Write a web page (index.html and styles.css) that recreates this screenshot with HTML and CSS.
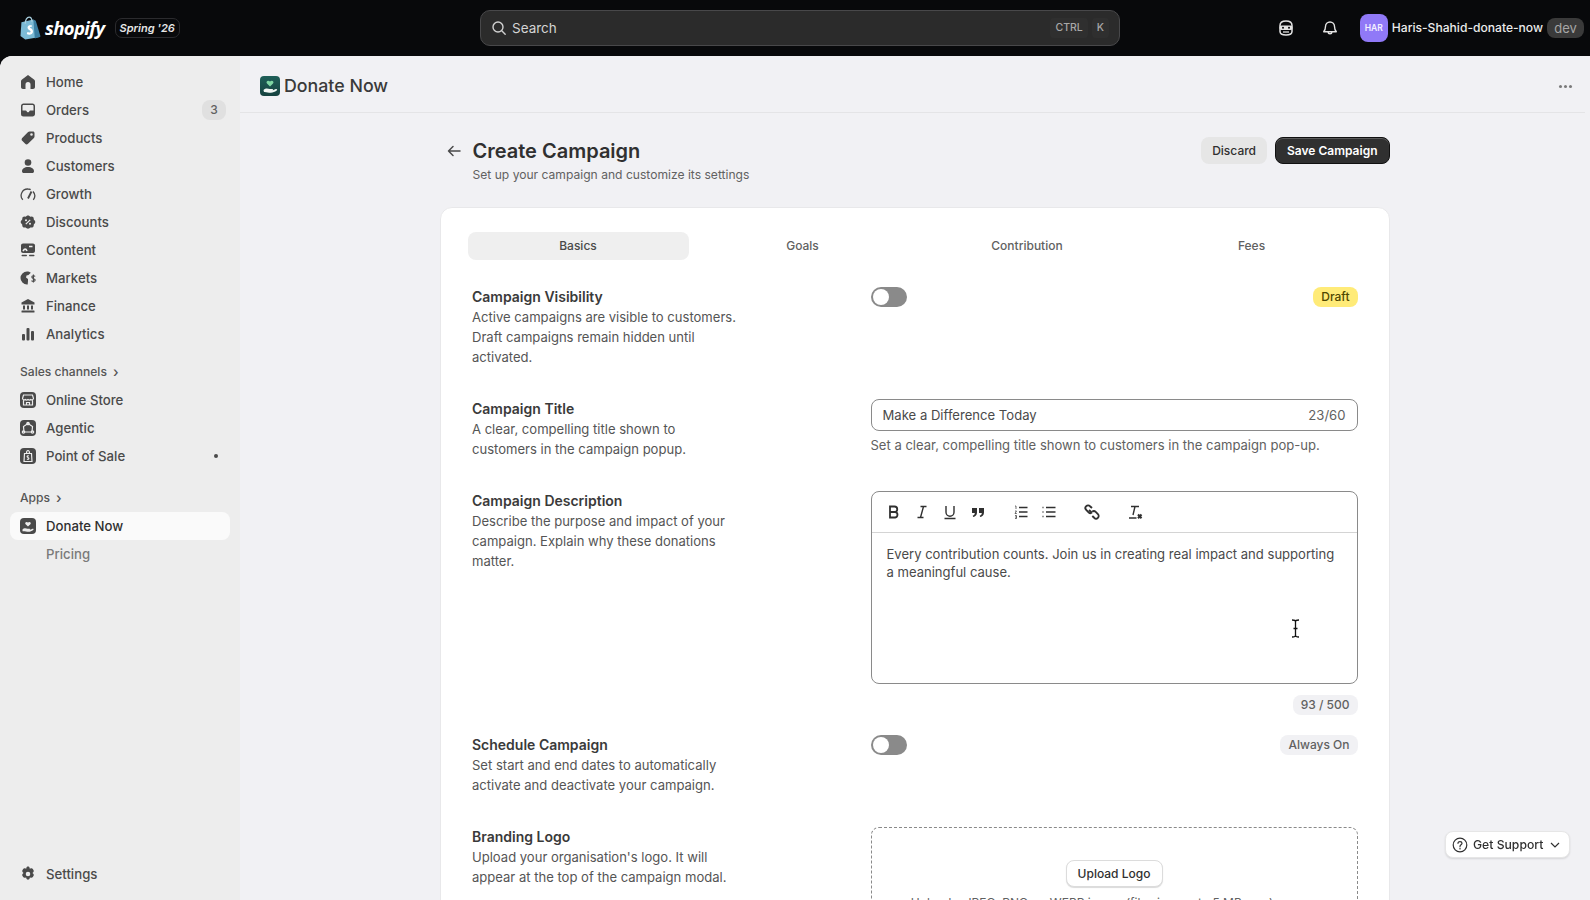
FILE: index.html
```html
<!DOCTYPE html>
<html lang="en">

<head>
    <meta charset="UTF-8">
    <meta name="viewport" content="width=device-width, initial-scale=1.0">
    <title>Create Campaign || Donate Now</title>
    <link rel="stylesheet" href="styles.css">
</head>

<body>
    <header class="topbar">
        <div class="brand">
            <svg class="brand_bag" viewBox="0 0 22 25" width="21" height="24">
                <path d="M1.500 6.500 14 3.500 21 22 5.500 24.500 0.500 21Z" fill="#7cbbd6" />
                <path d="M14 3.500 16.500 5 21.500 21.500 15.500 23.500Z" fill="#3b7fa3" />
                <path d="M5.500 8c0-4 2-7 4-7s3 2 3 5" fill="none" stroke="#a9cfdf" stroke-width="1.300" />
                <path d="M12.500 10c-1.200-.7-4.600-.6-4.600 2 0 2.600 3.200 2.700 3.200 4.200 0 1.200-1.800 1.300-3.300.5l-.7 2.200c2.200 1.200 6.500.9 6.500-2.800 0-3-3.200-3.200-3.200-4.300 0-.7 1-.9 2-.5Z" fill="#fff" />
            </svg>
            <span class="brand_name">shopify</span>
            <span class="brand_tag">Spring '26</span>
        </div>
        <div class="search">
            <svg viewBox="0 0 16 16" width="16" height="16" fill="none" stroke="#d0d0d0" stroke-width="1.400">
                <circle cx="7" cy="7" r="5" />
                <path d="m11 11 3.200 3.200" stroke-linecap="round" />
            </svg>
            <span class="search_text">Search</span>
            <span class="key">CTRL</span>
            <span class="key">K</span>
        </div>
        <div class="top_right">
            <svg class="top_icon" viewBox="0 0 18 18" width="18" height="18">
                <path d="M3 6.500C3 3.500 5 2 9 2s6 1.500 6 4.500v6c0 2-2 3.500-6 3.500s-6-1.500-6-3.500Z" fill="none" stroke="#e3e3e3" stroke-width="1.500" />
                <rect x="2.500" y="6.500" width="13" height="4.500" rx="2" fill="#e3e3e3" />
                <circle cx="6" cy="8.700" r="1" fill="#0a0a0c" />
                <circle cx="12" cy="8.700" r="1" fill="#0a0a0c" />
                <path d="M6 13h6" stroke="#e3e3e3" stroke-width="1.300" />
            </svg>
            <svg class="top_icon top_icon_bell" viewBox="0 0 18 18" width="18" height="18" fill="none" stroke="#e3e3e3" stroke-width="1.400">
                <path d="M4.500 7.500a4.500 4.500 0 0 1 9 0c0 3 .8 4 1.800 5.200H2.700C3.700 11.500 4.500 10.500 4.500 7.500Z" stroke-linejoin="round" />
                <path d="M7.200 13c0 2.400 3.600 2.400 3.600 0" />
            </svg>
            <span class="avatar">HAR</span>
            <span class="store_name">Haris-Shahid-donate-now</span>
            <span class="dev_chip">dev</span>
        </div>
    </header>

    <div class="frame">
        <nav class="sidebar">
            <a class="nav_item" href="#">
                <svg class="nav_icon" viewBox="0 0 16 16"><path d="M8 1 14 5.500c.6.5 1 1 1 1.800V13c0 1.200-.8 2-2 2h-2.500v-4.500a2.500 2.500 0 0 0-5 0V15H3c-1.200 0-2-.8-2-2V7.300c0-.8.400-1.300 1-1.800Z" /></svg>
                Home
            </a>
            <a class="nav_item" href="#">
                <svg class="nav_icon" viewBox="0 0 16 16"><path d="M3.500 1.500h9c1.400 0 2.500 1.100 2.500 2.500v8c0 1.400-1.100 2.500-2.500 2.500h-9A2.500 2.500 0 0 1 1 12V4c0-1.400 1.100-2.500 2.500-2.500ZM3.500 3C3 3 2.500 3.500 2.500 4v4.500h3.200c.5 0 .8.300 1 .8l.2.400c.1.300.4.500.7.500h.8c.3 0 .6-.2.700-.5l.2-.4c.2-.5.500-.8 1-.8h3.200V4c0-.5-.5-1-1-1Z" fill-rule="evenodd" /></svg>
                Orders
                <span class="nav_count">3</span>
            </a>
            <a class="nav_item" href="#">
                <svg class="nav_icon" viewBox="0 0 16 16"><path d="M9.500 1.500H13c.9 0 1.500.6 1.500 1.500v3.500c0 .5-.2 1-.6 1.400L8 13.800c-.8.800-2 .8-2.800 0L2.200 10.800c-.8-.8-.8-2 0-2.800L8.100 2.100c.4-.4.900-.6 1.400-.6ZM11.500 5.800a1.300 1.300 0 1 0 0-2.600 1.300 1.300 0 0 0 0 2.600Z" fill-rule="evenodd" /></svg>
                Products
            </a>
            <a class="nav_item" href="#">
                <svg class="nav_icon" viewBox="0 0 16 16"><circle cx="8" cy="4.500" r="3.300" /><path d="M8 9c3.500 0 6 1.700 6 4.200 0 1-.7 1.800-1.800 1.800H3.800C2.700 15 2 14.200 2 13.200 2 10.700 4.500 9 8 9Z" /></svg>
                Customers
            </a>
            <a class="nav_item" href="#">
                <svg class="nav_icon nav_icon_line" viewBox="0 0 16 16"><path d="M2.800 13.800A6.500 6.500 0 0 1 8 3c1 0 1.900.2 2.700.6M13 5.500a6.500 6.500 0 0 1 .3 8.300" /><path d="M8 12.500 11.500 5.500" stroke-width="1.800" /></svg>
                Growth
            </a>
            <a class="nav_item" href="#">
                <svg class="nav_icon" viewBox="0 0 16 16"><path d="M6.600 0c.8-.6 2-.6 2.800 0l1 .7 1.300-.1c1 0 1.900.8 2 1.800l.1 1.200.9 1c.8.900.8 2.200 0 3l-.9 1-.1 1.200c-.1 1-1 1.800-2 1.800l-1.300-.1-1 .7c-.8.600-2 .6-2.800 0l-1-.7-1.300.1c-1 0-1.900-.8-2-1.800L2.200 8.600l-.9-1c-.8-.8-.8-2.100 0-3l.9-1 .1-1.200c.1-1 1-1.800 2-1.800l1.300.1Z" transform="translate(0 2)" /><path d="m5.800 10.200 4.400-4.400" stroke="#ededed" stroke-width="1.200" fill="none" /><circle cx="6" cy="6.200" r="1" fill="#ededed" /><circle cx="10" cy="9.800" r="1" fill="#ededed" /></svg>
                Discounts
            </a>
            <a class="nav_item" href="#">
                <svg class="nav_icon" viewBox="0 0 16 16"><path d="M3 1.500h10c1.100 0 2 .9 2 2V9c0 1.100-.9 2-2 2H3c-1.100 0-2-.9-2-2V3.500c0-1.100.9-2 2-2Z" /><path d="M5.500 4.500h.1M3 9c1.500-2.500 3-2.500 4 0M9 4.500h3.500" stroke="#ededed" stroke-width="1.600" fill="none" /><rect x="1.500" y="12.800" width="5.500" height="1.500" rx=".7" /><rect x="9" y="12.800" width="5.500" height="1.500" rx=".7" /></svg>
                Content
            </a>
            <a class="nav_item" href="#">
                <svg class="nav_icon" viewBox="0 0 16 16"><path d="M7 1.500c1.500 0 2.800.5 3.800 1.300L8.500 5l-2 .5L6 7.500l2 1.500v2l-.3 3.500H7A6.500 6.500 0 0 1 7 1.500Z" /><path d="M15 6.500c-.4-1-3.200-1.200-3.200.6 0 1.900 3.400 1.300 3.400 3 0 1.700-2.900 1.500-3.700.5M13.400 4.500v8" fill="none" stroke="#4a4a4a" stroke-width="1.100" /></svg>
                Markets
            </a>
            <a class="nav_item" href="#">
                <svg class="nav_icon" viewBox="0 0 16 16"><path d="M8 1 14.500 4.500V6.500H1.500V4.500Z" /><path d="M3 7.500h2v4H3ZM7 7.500h2v4H7ZM11 7.500h2v4h-2Z" /><rect x="1.500" y="12.500" width="13" height="2" rx=".5" /></svg>
                Finance
            </a>
            <a class="nav_item" href="#">
                <svg class="nav_icon" viewBox="0 0 16 16"><rect x="2" y="8" width="3" height="6.500" rx="1" /><rect x="6.500" y="2" width="3" height="12.500" rx="1" /><rect x="11" y="5" width="3" height="9.500" rx="1" /></svg>
                Analytics
            </a>

            <div class="nav_label nav_label_sales">Sales channels <span class="nav_caret">&#8250;</span></div>
            <a class="nav_item" href="#">
                <span class="nav_tile">
                    <svg viewBox="0 0 16 16" fill="none" stroke="#ededed" stroke-width="1.200"><path d="M3.500 3h9l1 3.500a1.700 1.700 0 0 1-2.800 1 2 2 0 0 1-2.700 0 2 2 0 0 1-2.700 0 1.700 1.700 0 0 1-2.800-1ZM3.500 8.500V13h9V8.500M6.500 13v-2.500h3V13" /></svg>
                </span>
                Online Store
            </a>
            <a class="nav_item" href="#">
                <span class="nav_tile">
                    <svg viewBox="0 0 16 16" fill="none" stroke="#ededed" stroke-width="1.200"><path d="M8 3.500 12.500 6.500 12 12H4L3.500 6.500Z" /><circle cx="8" cy="3.500" r="1.200" /><circle cx="3.500" cy="12" r="1.200" /><circle cx="12.500" cy="12" r="1.200" /></svg>
                </span>
                Agentic
            </a>
            <a class="nav_item" href="#">
                <span class="nav_tile">
                    <svg viewBox="0 0 16 16" fill="none" stroke="#ededed" stroke-width="1.200"><path d="M4.500 5.500h7L12 13.500H4ZM6.500 5.500C6.500 3.500 7 2.500 8 2.500s1.500 1 1.500 3M8.800 8c-.6-.4-1.700-.2-1.700.6 0 1 1.800.9 1.800 2 0 .8-1.200.9-1.900.4" /></svg>
                </span>
                Point of Sale
                <span class="nav_dot"></span>
            </a>

            <div class="nav_label nav_label_apps">Apps <span class="nav_caret">&#8250;</span></div>
            <a class="nav_item nav_item_active" href="#">
                <span class="nav_tile">
                    <svg viewBox="0 0 16 16"><path d="M8 8.500 5.600 6.200c-1.300-1.400.8-3.200 2.400-1.600 1.600-1.600 3.700.2 2.400 1.600Z" fill="#ededed" /><path d="M2.500 11.500c2-1.800 3.500-1 5-.7h2c1 0 1 1.200 0 1.200H7.800h2l2.700-1.200c1-.3 1.500.6.700 1.200-1.500 1-3 1.800-4.700 1.800-2 0-3.500-.8-6-.6Z" fill="#ededed" /></svg>
                </span>
                Donate Now
            </a>
            <a class="nav_item nav_item_sub" href="#">Pricing</a>

            <a class="nav_item nav_settings" href="#">
                <svg class="nav_icon" viewBox="1.500 1 13 14"><path d="M8 1c.7 0 1.200.4 1.400 1l.2.800 1-.3c.6-.2 1.300 0 1.600.6l.7 1.200c.3.500.2 1.200-.3 1.700l-.7.600.7.700c.5.400.6 1.100.3 1.700l-.7 1.200c-.3.500-1 .8-1.600.6l-1-.3-.2 1c-.2.600-.7 1-1.400 1s-1.200-.4-1.400-1l-.2-1-1 .3c-.6.200-1.300-.1-1.600-.6l-.7-1.200c-.3-.6-.2-1.300.3-1.700l.7-.7-.7-.6c-.5-.5-.6-1.200-.3-1.700L3.800 3.100c.3-.6 1-.8 1.600-.6l1 .3.200-.8C6.800 1.400 7.300 1 8 1Zm0 4.500a2 2 0 1 0 0 4 2 2 0 0 0 0-4Z" fill-rule="evenodd" transform="translate(0 .5)" /></svg>
                Settings
            </a>
        </nav>

        <main class="main">
            <div class="app_bar">
                <div class="app_title">
                    <span class="app_logo">
                        <svg viewBox="0 0 20 20" width="20" height="20"><path d="M10 10.500 7 7.500c-1.600-1.800 1-4 3-2 2-2 4.600.2 3 2Z" fill="#7fd6a3" /><path d="M3.500 14c2.500-2.200 4.500-1.200 6.200-.9h2.500c1.200 0 1.200 1.500 0 1.500h-2.300 2.500l3.400-1.500c1.200-.4 1.900.8.900 1.500-1.900 1.300-3.800 2.200-5.900 2.200-2.500 0-4.400-1-6.800-.8Z" fill="#f2f7f4" /></svg>
                    </span>
                    Donate Now
                </div>
                <span class="app_more"><i></i><i></i><i></i></span>
            </div>

            <div class="page">
                <div class="page_head">
                    <svg class="back_arrow" viewBox="0 0 16 16" width="16" height="16" fill="none" stroke="#4a4a4a" stroke-width="1.500" stroke-linecap="round" stroke-linejoin="round"><path d="M14 8H2.500M7 3.500 2.500 8 7 12.500" /></svg>
                    <div class="page_titles">
                        <h1>Create Campaign</h1>
                        <p>Set up your campaign and customize its settings</p>
                    </div>
                    <button class="btn_plain" type="button">Discard</button>
                    <button class="btn_dark" type="button">Save Campaign</button>
                </div>

                <section class="card">
                    <div class="tabs">
                        <span class="tab tab_active">Basics</span>
                        <span class="tab">Goals</span>
                        <span class="tab">Contribution</span>
                        <span class="tab">Fees</span>
                    </div>

                    <div class="row">
                        <div class="row_info">
                            <h2>Campaign Visibility</h2>
                            <p>Active campaigns are visible to customers. Draft campaigns remain hidden until activated.</p>
                        </div>
                        <div class="switch_line">
                            <span class="switch"></span>
                            <span class="pill pill_draft">Draft</span>
                        </div>
                    </div>

                    <div class="row">
                        <div class="row_info">
                            <h2>Campaign Title</h2>
                            <p>A clear, compelling title shown to customers in the campaign popup.</p>
                        </div>
                        <div>
                            <div class="text_input">
                                <span>Make a Difference Today</span>
                                <span class="input_count">23/60</span>
                            </div>
                            <p class="hint">Set a clear, compelling title shown to customers in the campaign pop-up.</p>
                        </div>
                    </div>

                    <div class="row row_tight">
                        <div class="row_info">
                            <h2>Campaign Description</h2>
                            <p>Describe the purpose and impact of your campaign. Explain why these donations matter.</p>
                        </div>
                        <div>
                            <div class="editor">
                                <div class="toolbar">
                                    <svg class="tool tool_bold" viewBox="0 0 16 16"><path d="M4 2.500h4.500a2.700 2.700 0 0 1 0 5.500H4ZM4 8h5.200a2.800 2.800 0 0 1 0 5.500H4Z" /></svg>
                                    <svg class="tool" viewBox="0 0 16 16"><path d="M6.500 2.500h6M3.500 13.500h6M9.500 2.500l-3 11" /></svg>
                                    <svg class="tool" viewBox="0 0 16 16"><path d="M4 2v6.200a4 4 0 0 0 8 0V2M2.500 14.500h11" /></svg>
                                    <svg class="tool tool_fill tool_last" viewBox="0 0 16 16"><path d="M2 4h5v4.500C7 11 5.500 12.500 3.200 13l-.5-1.300C4 11.300 4.800 10.500 4.800 9H2ZM9 4h5v4.500c0 2.500-1.500 4-3.800 4.500l-.5-1.300c1.300-.4 2.100-1.200 2.100-2.700H9Z" /></svg>
                                    <svg class="tool" viewBox="0 0 16 16"><path d="M6 3.500h8.500M6 8h8.500M6 12.500h8.500" /><path d="M2 2h1v3M2 7h1.500L2 9.500h1.800M2 11.500h1.500v3H2M2 13h1.500" stroke-width=".7" /></svg>
                                    <svg class="tool tool_last" viewBox="0 0 16 16"><path d="M5 3.500h9.500M5 8h9.500M5 12.500h9.500M1.500 3.500h1M1.500 8h1M1.500 12.500h1" /></svg>
                                    <svg class="tool tool_last tool_link" viewBox="0 0 16 16"><path d="M7.500 8.500 5 6" /><path d="M8 4 6 2.200a2.600 2.600 0 0 0-3.800 3.700l2.400 2.400a2.600 2.600 0 0 0 3.500.1" /><path d="M8.200 7.800a2.600 2.600 0 0 1 3.500.1l2.200 2.200a2.600 2.600 0 0 1-3.700 3.700L8.300 12" /></svg>
                                    <svg class="tool" viewBox="0 0 16 16"><path d="M4 2.500h8M8 2.500 6 11M2 14h7.500" /><path d="M11 10.500l3.500 3.800M14.500 10.500 11 14.300" stroke-width="2" /></svg>
                                </div>
                                <div class="editor_body">Every contribution counts. Join us in creating real impact and supporting a meaningful cause.</div>
                            </div>
                            <div class="counter_line"><span class="pill pill_grey">93 / 500</span></div>
                        </div>
                    </div>

                    <div class="row">
                        <div class="row_info">
                            <h2>Schedule Campaign</h2>
                            <p>Set start and end dates to automatically activate and deactivate your campaign.</p>
                        </div>
                        <div class="switch_line">
                            <span class="switch"></span>
                            <span class="pill pill_grey">Always On</span>
                        </div>
                    </div>

                    <div class="row">
                        <div class="row_info">
                            <h2>Branding Logo</h2>
                            <p>Upload your organisation's logo. It will appear at the top of the campaign modal.</p>
                        </div>
                        <div class="dropzone">
                            <button class="btn_white" type="button">Upload Logo</button>
                            <p class="drop_hint">Upload a JPEG, PNG, or WEBP image (file size: up to 5 MB max)</p>
                        </div>
                    </div>
                </section>
            </div>
        </main>
    </div>

    <div class="support">
        <svg viewBox="0 0 16 16" width="16" height="16" fill="none" stroke="#303030" stroke-width="1.200"><circle cx="8" cy="8" r="6.800" /><path d="M6 6.300C6 3.900 10 4 10 6.300c0 1.600-2 1.500-2 3.200" stroke-linecap="round" /><path d="M8 11.200v.8" stroke-linecap="round" /></svg>
        Get Support
        <svg class="support_chev" viewBox="0 0 12 12" width="12" height="12" fill="none" stroke="#303030" stroke-width="1.200"><path d="m2 4 4 4 4-4" /></svg>
    </div>

    <svg class="text_cursor" viewBox="0 0 9 19" width="9" height="19" fill="none" stroke="#111" stroke-width="1.300"><path d="M1 1c2 0 3.500 0 3.500 1.500v14C4.500 18 3 18 1 18M8 1C6 1 4.500 1 4.500 2.500M8 18c-2 0-3.500 0-3.500-1.500M2.500 9.500h4" /></svg>
</body>
</html>
```

FILE: styles.css
```css
* {
    box-sizing: border-box;
}

body {
    margin: 0;
    height: 100vh;
    overflow: hidden;
    display: flex;
    flex-direction: column;
    background: #08090b;
    color: #303030;
    font-family: Inter, "Liberation Sans", sans-serif;
    font-size: 13px;
    line-height: 20px;
}

h1,
h2,
p {
    margin: 0;
}

a {
    color: inherit;
    text-decoration: none;
}

/* top bar */
.topbar {
    height: 56px;
    flex: none;
    display: flex;
    align-items: center;
    padding: 0 6px 0 20px;
    position: relative;
}

.brand {
    display: flex;
    align-items: center;
    width: 460px;
}

.brand_name {
    margin-left: 4px;
    color: #fff;
    font-family: "Open Sans", sans-serif;
    font-style: italic;
    font-weight: 700;
    font-size: 18.500px;
    letter-spacing: -0.6px;
}

.brand_tag {
    margin-left: 10px;
    padding: 0 4px;
    height: 20px;
    display: flex;
    align-items: center;
    border: 1px solid #2b2b2e;
    border-radius: 7px;
    color: #e6e6e6;
    font-size: 11px;
    font-style: italic;
    font-weight: 600;
}

.search {
    width: 640px;
    height: 36px;
    display: flex;
    align-items: center;
    gap: 4px;
    padding: 0 10px;
    background: #2b2b2b;
    border: 1px solid #48484a;
    border-radius: 10px;
    color: #d4d4d4;
    font-size: 13.500px;
}

.search_text {
    flex: 1;
    margin-left: 1px;
}

.key {
    height: 20px;
    padding: 0 5px;
    display: flex;
    align-items: center;
    background: #2f2f2f;
    border-radius: 4px;
    color: #a8a8a8;
    font-size: 10.500px;
    font-weight: 500;
}

.top_right {
    margin-left: auto;
    display: flex;
    align-items: center;
}

.top_icon {
    margin-right: 26px;
}

.top_icon_bell {
    margin-right: 21px;
}

.avatar {
    width: 28px;
    height: 28px;
    display: flex;
    align-items: center;
    justify-content: center;
    background: #9079f7;
    border-radius: 8px;
    color: #f4f0ff;
    font-size: 8.500px;
    font-weight: 600;
}

.store_name {
    margin-left: 4px;
    color: #ececec;
    font-size: 12.100px;
    font-weight: 500;
}

.dev_chip {
    margin-left: 4px;
    width: 37px;
    height: 20px;
    display: flex;
    align-items: center;
    justify-content: center;
    background: #3a3a3a;
    border-radius: 8px;
    color: #a6a6a6;
}

/* frame under the top bar */
.frame {
    flex: 1;
    min-height: 0;
    display: flex;
    background: #f1f1f4;
    border-radius: 12px 0 0 0;
    overflow: hidden;
}

.sidebar {
    width: 240px;
    flex: none;
    display: flex;
    flex-direction: column;
    padding: 12px 10px 12px;
    background: #ededed;
}

.nav_item {
    height: 28px;
    flex: none;
    display: flex;
    align-items: center;
    gap: 10px;
    padding: 0 4px 0 10px;
    border-radius: 8px;
    color: #4a4a4a;
    font-size: 13.200px;
    font-weight: 500;
}

.nav_icon {
    width: 16px;
    height: 16px;
    flex: none;
    fill: #4a4a4a;
}

.nav_icon_line {
    fill: none;
    stroke: #4a4a4a;
    stroke-width: 1.300;
}

.nav_tile {
    width: 16px;
    height: 16px;
    flex: none;
    background: #4a4a4a;
    border-radius: 4px;
}

.nav_tile svg {
    display: block;
}

.nav_count {
    margin-left: auto;
    width: 24px;
    height: 20px;
    display: flex;
    align-items: center;
    justify-content: center;
    background: #e0e0e0;
    border-radius: 8px;
    color: #616161;
    font-size: 12px;
}

.nav_dot {
    margin-left: auto;
    margin-right: 8px;
    width: 4px;
    height: 4px;
    border-radius: 50%;
    background: #4a4a4a;
}

.nav_label {
    height: 28px;
    flex: none;
    display: flex;
    align-items: center;
    gap: 6px;
    padding-left: 10px;
    color: #555;
    font-size: 12.100px;
    font-weight: 500;
}

.nav_label_sales {
    margin-top: 10px;
}

.nav_label_apps {
    margin-top: 14px;
}

.nav_caret {
    font-size: 14px;
}

.nav_item_active {
    background: #fafafa;
    color: #303030;
}

.nav_item_sub {
    padding-left: 36px;
    color: #7a7a7a;
}

.nav_settings {
    margin-top: auto;
}

.main {
    flex: 1;
    min-width: 0;
}

.app_bar {
    height: 57px;
    margin-right: 5px;
    padding: 4px 13px 0 20px;
    display: flex;
    align-items: center;
    justify-content: space-between;
    border-bottom: 1px solid #e4e4e6;
}

.app_title {
    display: flex;
    align-items: center;
    gap: 4px;
    color: #3a3a3a;
    font-size: 17.800px;
    font-weight: 500;
}

.app_logo {
    width: 20px;
    height: 20px;
    background: linear-gradient(#1f5f58, #16423f);
    border-radius: 4px;
}

.app_logo svg {
    display: block;
}

.app_more {
    display: flex;
    gap: 2px;
}

.app_more i {
    width: 3px;
    height: 3px;
    border-radius: 50%;
    background: #7a7a7a;
}

/* page content */
.page {
    width: 949px;
    margin: 24px auto 0;
}

.page_head {
    display: flex;
    align-items: flex-start;
    height: 70px;
}

.back_arrow {
    margin: 6px 11px 0 5px;
    flex: none;
}

.page_titles {
    flex: 1;
}

.page_titles h1 {
    color: #303030;
    font-size: 20px;
    line-height: 28px;
    font-weight: 600;
}

.page_titles p {
    margin-top: 1px;
    color: #616161;
    font-size: 12.100px;
    line-height: 18px;
}

.btn_plain,
.btn_dark,
.btn_white {
    height: 27px;
    padding: 0 11px;
    font-family: inherit;
    font-size: 12px;
    font-weight: 500;
    border-radius: 8px;
}

.btn_plain {
    margin-right: 8px;
    background: #e6e6e6;
    border: 0;
    color: #303030;
}

.btn_dark {
    background: #303030;
    border: 1px solid #111;
    box-shadow: inset 0 1px 0 #5a5a5a;
    color: #fff;
    font-weight: 600;
}

.btn_white {
    background: #fff;
    border: 1px solid #dcdcdc;
    box-shadow: 0 1px 1px rgba(0, 0, 0, 0.15);
    color: #303030;
}

.card {
    margin-left: -1px;
    padding: 24px 30px 0;
    background: #fff;
    border: 1px solid #e8e8ea;
    border-radius: 12px;
}

.tabs {
    display: grid;
    grid-template-columns: repeat(4, 221px);
    column-gap: 3.500px;
    margin: 0 -3px 27px;
}

.tab {
    height: 28px;
    display: flex;
    align-items: center;
    justify-content: center;
    border-radius: 8px;
    color: #616161;
    font-size: 12px;
    font-weight: 500;
}

.tab_active {
    background: #efefef;
    color: #4a4a4a;
}

.row {
    display: grid;
    grid-template-columns: 400px 487px;
    margin-bottom: 32px;
}

.row_tight {
    margin-bottom: 20px;
}

.row_info {
    max-width: 270px;
    margin-left: 1.500px;
}

.row_info h2 {
    color: #3a3a3a;
    font-size: 14px;
    line-height: 20px;
    font-weight: 600;
}

.row_info p {
    color: #555;
    font-size: 13.050px;
}

.switch_line {
    display: flex;
    align-items: flex-start;
    justify-content: space-between;
}

.switch {
    width: 36px;
    height: 20px;
    padding: 2px;
    display: block;
    background: #8a8a8a;
    border-radius: 10px;
}

.switch::before {
    content: "";
    display: block;
    width: 16px;
    height: 16px;
    background: #fff;
    border-radius: 50%;
}

.pill {
    height: 20px;
    display: flex;
    align-items: center;
    padding: 0 8px;
    border-radius: 8px;
    font-size: 12px;
}

.pill_draft {
    background: #ffeb78;
    color: #4f4700;
    font-weight: 500;
}

.pill_grey {
    background: #f1f1f4;
    color: #616161;
    font-weight: 500;
}

.text_input {
    height: 32px;
    padding: 0 11px;
    display: flex;
    align-items: center;
    justify-content: space-between;
    border: 1px solid #8a8a8a;
    border-radius: 8px;
    color: #4a4a4a;
    font-size: 13.100px;
    font-weight: 400;
}

.input_count {
    color: #616161;
    font-weight: 400;
}

.hint {
    margin-top: 4px;
    color: #616161;
    font-size: 13.050px;
}

.editor {
    height: 193px;
    border: 1px solid #8a8a8a;
    border-radius: 8px;
}

.toolbar {
    height: 41px;
    padding: 0 14px;
    display: flex;
    align-items: center;
    gap: 12px;
    border-bottom: 1px solid #d4d4d4;
}

.tool {
    width: 16px;
    height: 16px;
    fill: none;
    stroke: #303030;
    stroke-width: 1.400;
}

.tool_bold {
    stroke-width: 1.800;
}

.tool_link {
    stroke-width: 1.900;
}

.tool_fill {
    fill: #303030;
    stroke: none;
}

.tool_last {
    margin-right: 15px;
}

.editor_body {
    padding: 12px 15px;
    color: #4a4a4a;
    font-size: 13.050px;
    line-height: 18px;
}

.counter_line {
    margin-top: 11px;
    display: flex;
    justify-content: flex-end;
}

.dropzone {
    height: 130px;
    padding-top: 32px;
    display: flex;
    flex-direction: column;
    align-items: center;
    border: 1px dashed #8a8a8a;
    border-radius: 8px;
}

.btn_white {
    width: 97px;
    padding: 0;
    flex: none;
}

.drop_hint {
    margin-top: 6px;
    padding-right: 44px;
    color: #616161;
    font-size: 12px;
}

/* things that float over the page */
.support {
    position: fixed;
    left: 1445px;
    top: 831px;
    width: 125px;
    height: 27px;
    display: flex;
    align-items: center;
    gap: 5px;
    padding-left: 6px;
    background: #fff;
    border: 1px solid #e6e6e6;
    border-radius: 8px;
    box-shadow: 0 1px 2px rgba(0, 0, 0, 0.12);
    font-size: 12.200px;
    font-weight: 500;
}

.support_chev {
    margin-left: 1px;
}

.text_cursor {
    position: fixed;
    left: 1291px;
    top: 619px;
}
```
